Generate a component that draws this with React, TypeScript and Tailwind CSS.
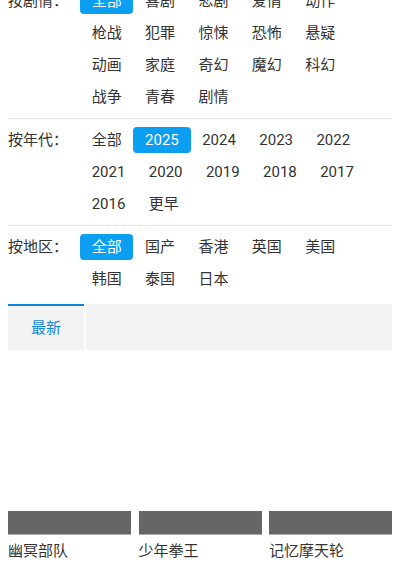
import React from 'react';

const genres = ['全部', '喜剧', '悲剧', '爱情', '动作', '枪战', '犯罪', '惊悚', '恐怖', '悬疑', '动画', '家庭', '奇幻', '魔幻', '科幻', '战争', '青春', '剧情'];
const years = ['全部', '2025', '2024', '2023', '2022', '2021', '2020', '2019', '2018', '2017', '2016', '更早'];
const areas = ['全部', '国产', '香港', '英国', '美国', '韩国', '泰国', '日本'];
const movies = ['幽冥部队', '少年拳王', '记忆摩天轮'];

function FilterRow({ label, items, active }: { label: string; items: string[]; active: string }) {
  return (
    <div className="flex py-[5px] border-b border-dotted border-[#d8d8d8]">
      <div className="w-[72px] shrink-0 h-8 leading-8 text-[#333]">{label}</div>
      <div className="flex flex-wrap flex-1">
        {items.map((it) => (
          <div key={it} className="h-8 flex items-center">
            <span
              className={
                it === active
                  ? 'px-[11.7px] h-[26px] leading-[26px] rounded-[4px] bg-[#0c9ef1] text-white'
                  : 'px-[11.7px] h-[26px] leading-[26px] text-[#333]'
              }
            >
              {it}
            </span>
          </div>
        ))}
      </div>
    </div>
  );
}

export default function App() {
  return (
    <div className="bg-white min-h-screen overflow-hidden text-[15px]" style={{ fontFamily: 'Roboto, "Noto Sans CJK SC", sans-serif' }}>
      <div className="px-2 mt-[-20px]">
        <FilterRow label="按剧情：" items={genres} active="全部" />
        <FilterRow label="按年代：" items={years} active="2025" />
        <div className="flex pt-[5px] pb-[9px]">
          <div className="w-[72px] shrink-0 h-8 leading-8 text-[#333]">按地区：</div>
          <div className="flex flex-wrap flex-1">
            {areas.map((it) => (
              <div key={it} className="h-8 flex items-center">
                <span
                  className={
                    it === '全部'
                      ? 'px-[11.7px] h-[26px] leading-[26px] rounded-[4px] bg-[#0c9ef1] text-white'
                      : 'px-[11.7px] h-[26px] leading-[26px] text-[#333]'
                  }
                >
                  {it}
                </span>
              </div>
            ))}
          </div>
        </div>

        <div className="flex h-[46px] gap-[2px]">
          <div className="w-[76px] bg-[#f3f3f3] border-t-2 border-[#0a85d8] flex items-center justify-center text-[#1688d8]">最新</div>
          <div className="flex-1 bg-[#f3f3f3]"></div>
        </div>

        <div className="grid grid-cols-3 gap-x-[7.5px] mt-[161px]">
          {movies.map((m) => (
            <div key={m}>
              <div className="h-6 bg-[#666] border-b border-[#aaa]"></div>
              <div className="mt-[5px] leading-[22px] text-[#333] whitespace-nowrap">{m}</div>
            </div>
          ))}
        </div>
      </div>
    </div>
  );
}
